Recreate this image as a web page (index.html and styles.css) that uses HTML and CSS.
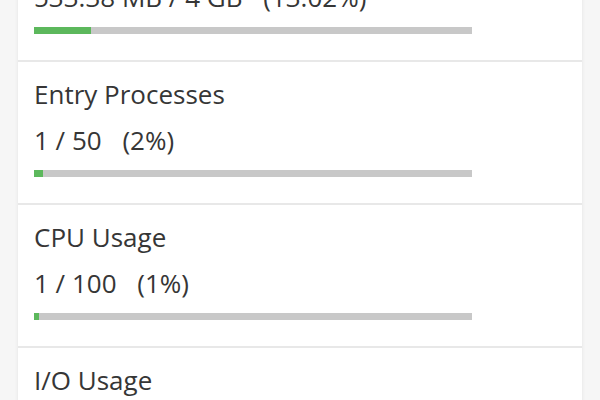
FILE: index.html
```html
<!DOCTYPE html>
<html lang="en">
<head>
<meta charset="utf-8">
<title>Resource Usage</title>
<link rel="stylesheet" href="styles.css">
</head>
<body>
<div class="page">
  <div class="card">
    <div class="stat">
      <div class="stat-title">Physical Memory Usage</div>
      <div class="stat-value">533.38 MB / 4 GB <span class="pct">(13.02%)</span></div>
      <div class="bar"><div class="fill" style="width:13.02%"></div></div>
    </div>
    <div class="stat">
      <div class="stat-title">Entry Processes</div>
      <div class="stat-value">1 / 50 <span class="pct">(2%)</span></div>
      <div class="bar"><div class="fill" style="width:2%"></div></div>
    </div>
    <div class="stat">
      <div class="stat-title">CPU Usage</div>
      <div class="stat-value">1 / 100 <span class="pct">(1%)</span></div>
      <div class="bar"><div class="fill" style="width:1%"></div></div>
    </div>
    <div class="stat">
      <div class="stat-title">I/O Usage</div>
      <div class="stat-value">0 KB/s / 1 MB/s <span class="pct">(0%)</span></div>
      <div class="bar"><div class="fill" style="width:0%"></div></div>
    </div>
  </div>
</div>
</body>
</html>
```
FILE: styles.css
```css
html, body {
  margin: 0;
  padding: 0;
  background: #f6f6f6;
  font-family: "Open Sans", "Noto Sans", sans-serif;
  color: #363636;
  overflow: hidden;
}
.page {
  padding: 0 18px;
  margin-top: -82px;
}
.card {
  background: #ffffff;
  border-top: 1px solid #e6e6e6;
  box-shadow: 0 0 4px rgba(0, 0, 0, 0.08);
}
.stat {
  padding: 14px 16px 26px;
  border-bottom: 2px solid #e8e8e8;
}
.stat-title,
.stat-value {
  font-size: 26px;
  line-height: 36px;
}
.stat-title {
  margin-bottom: 10px;
}
.pct {
  margin-left: 14px;
}
.bar {
  margin-top: 12px;
  width: 438px;
  height: 7px;
  background: #c8c8c8;
}
.fill {
  height: 100%;
  min-width: 5px;
  background: #5cb85c;
}
```
